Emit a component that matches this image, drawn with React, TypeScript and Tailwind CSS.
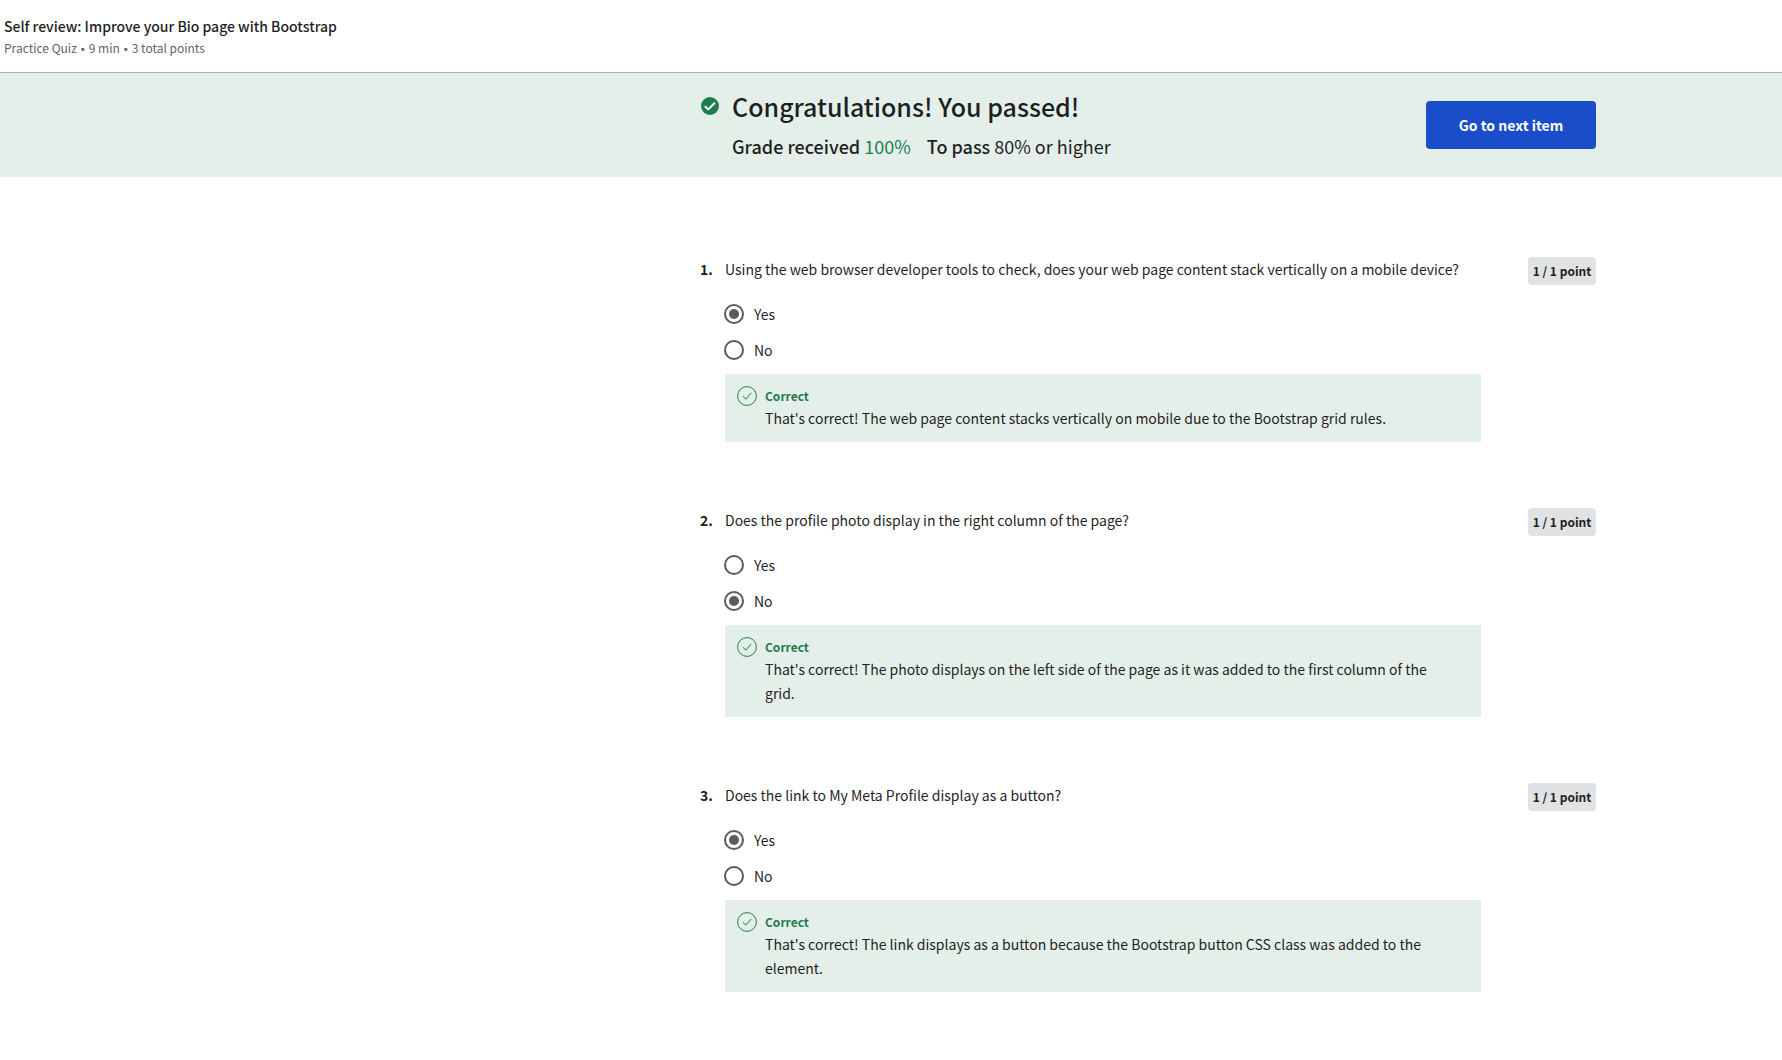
import React, { useState } from "react";

type Question = {
  id: number;
  text: string;
  answer: "Yes" | "No";
  feedback: string;
};

const questions: Question[] = [
  {
    id: 1,
    text: "Using the web browser developer tools to check, does your web page content stack vertically on a mobile device?",
    answer: "Yes",
    feedback:
      "That's correct! The web page content stacks vertically on mobile due to the Bootstrap grid rules.",
  },
  {
    id: 2,
    text: "Does the profile photo display in the right column of the page?",
    answer: "No",
    feedback:
      "That's correct! The photo displays on the left side of the page as it was added to the first column of the grid.",
  },
  {
    id: 3,
    text: "Does the link to My Meta Profile display as a button?",
    answer: "Yes",
    feedback:
      "That's correct! The link displays as a button because the Bootstrap button CSS class was added to the element.",
  },
];

function PassedIcon() {
  return (
    <svg className="size-[18px] shrink-0" viewBox="0 0 18 18" aria-hidden="true">
      <circle cx="9" cy="9" r="9" fill="#1d7c50" />
      <path d="M3.9 9.2l3.3 3.2 6.7-6.6" fill="none" stroke="#fff" strokeWidth="2" />
    </svg>
  );
}

function CorrectIcon() {
  return (
    <svg className="size-5 shrink-0" viewBox="0 0 20 20" fill="none" stroke="#1d7c50" aria-hidden="true">
      <circle cx="10" cy="10" r="9.4" strokeWidth="1" />
      <path d="M6 10.2l2.8 3 5.4-6.4" strokeWidth="1" />
    </svg>
  );
}

function Bullet() {
  return <span className="font-['DejaVu_Sans'] text-[11px] leading-none">•</span>;
}

function QuestionItem({ question }: { question: Question }) {
  const [choice, setChoice] = useState<string>(question.answer);
  const titleId = `question-${question.id}`;
  return (
    <li className="flex items-start">
      <span className="w-[25px] shrink-0 font-bold">{question.id}.</span>
      <div className="min-w-0 flex-1">
        <p id={titleId}>{question.text}</p>
        <div role="radiogroup" aria-labelledby={titleId} className="-ml-px mt-[15px] mb-1.5">
          {["Yes", "No"].map((option) => (
            <label key={option} className="flex h-9 w-fit items-center gap-2.5">
              <input
                type="radio"
                name={titleId}
                value={option}
                checked={choice === option}
                onChange={() => setChoice(option)}
                className="size-5 appearance-none rounded-full border-2 border-[#5b5b5b] bg-white bg-clip-content p-[3px] checked:bg-[#5b5b5b]"
              />
              {option}
            </label>
          ))}
        </div>
        <div className="flex gap-2 bg-[#e5efea] py-3 pr-7 pl-3">
          <CorrectIcon />
          <div>
            <p className="text-[12px] leading-5 font-bold text-[#1d7c50]">Correct</p>
            <p>{question.feedback}</p>
          </div>
        </div>
      </div>
      <span className="ml-[47px] w-17 shrink-0 rounded bg-[#e1e2e4] text-center text-[12px] leading-7 font-bold whitespace-nowrap">
        1 / 1 point
      </span>
    </li>
  );
}

export default function App() {
  return (
    <div className="min-h-screen bg-white font-['Noto_Sans_CJK_SC','Noto_Sans',sans-serif] text-[14px] leading-6 text-[#1f1f1f]">
      <header className="border-b border-[#b3b3b3] px-1 pt-[15px] pb-[14px]">
        <h1 className="leading-[23px] font-medium">Self review: Improve your Bio page with Bootstrap</h1>
        <p className="text-[12px] leading-5 text-[#636363]">
          Practice Quiz <Bullet /> 9 min <Bullet /> 3 total points
        </p>
      </header>

      <section className="bg-[#e5efea] pr-[186px]">
        <div className="ml-auto flex max-w-[896px] items-center justify-between">
          <div className="grid grid-cols-[auto_1fr] items-center gap-x-[13px] pt-[15px] pb-[17px] pl-px">
            <PassedIcon />
            <h2 className="text-[25px] leading-9 font-medium">Congratulations! You passed!</h2>
            <p className="col-start-2 flex gap-4 pt-2 text-[18px] leading-7">
              <span>
                <strong className="font-medium">Grade received</strong>{" "}
                <span className="text-[#1d7c50]">100%</span>
              </span>
              <span>
                <strong className="font-medium">To pass</strong> 80% or higher
              </span>
            </p>
          </div>
          <button
            type="button"
            className="h-12 w-[170px] rounded bg-[#1a4dc9] font-bold whitespace-nowrap text-white"
          >
            Go to next item
          </button>
        </div>
      </section>

      <main className="pr-[186px]">
        <ol className="ml-auto flex max-w-[896px] flex-col gap-[66px] pt-20 pb-16">
          {questions.map((q) => (
            <QuestionItem key={q.id} question={q} />
          ))}
        </ol>
      </main>
    </div>
  );
}
